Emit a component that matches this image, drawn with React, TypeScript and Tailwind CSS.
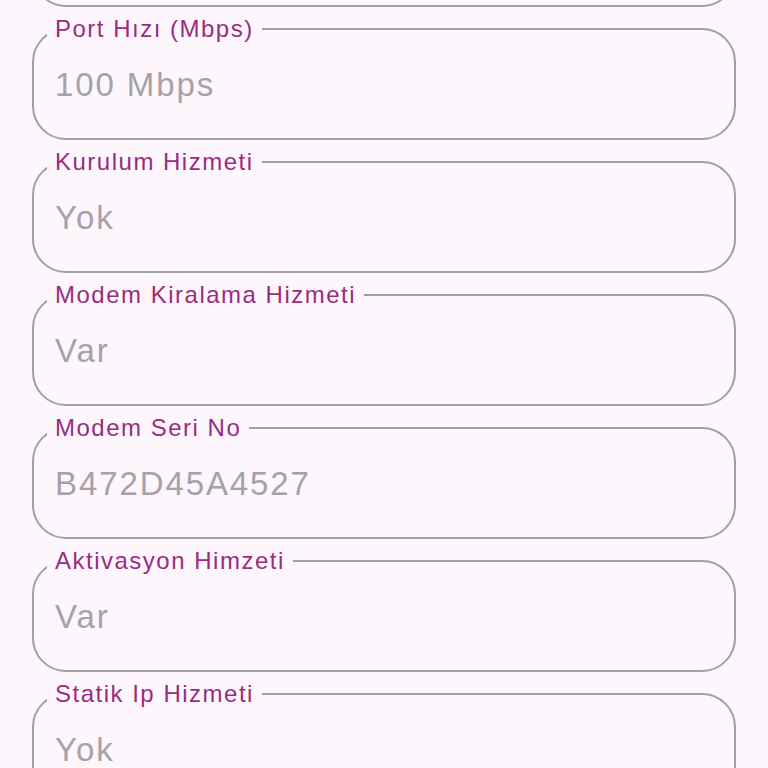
const fields = [
  { label: 'Tarife Adı', value: 'Fiber' },
  { label: 'Port Hızı (Mbps)', value: '100 Mbps' },
  { label: 'Kurulum Hizmeti', value: 'Yok' },
  { label: 'Modem Kiralama Hizmeti', value: 'Var' },
  { label: 'Modem Seri No', value: 'B472D45A4527' },
  { label: 'Aktivasyon Himzeti', value: 'Var' },
  { label: 'Statik Ip Hizmeti', value: 'Yok' },
];

const App = () => {
  return (
    <div className="h-[768px] w-[768px] overflow-hidden bg-[#fdf7fd] font-['Liberation_Sans',Arial,sans-serif]">
      <div className="mt-[-118px] flex flex-col gap-2 px-8">
        {fields.map((field) => (
          <fieldset
            key={field.label}
            className="m-0 h-[125px] rounded-[34px] border-2 border-[#a39da5] p-0 pl-[13px]"
          >
            <legend className="px-2 text-[24px] leading-[28px] tracking-[1.5px] text-[#9b2c7d]">
              {field.label}
            </legend>
            <div className="ml-2 mt-[22px] text-[33px] leading-[40px] tracking-[1.9px] text-[#a7a1a9]">
              {field.value}
            </div>
          </fieldset>
        ))}
      </div>
    </div>
  );
};

export default App;
